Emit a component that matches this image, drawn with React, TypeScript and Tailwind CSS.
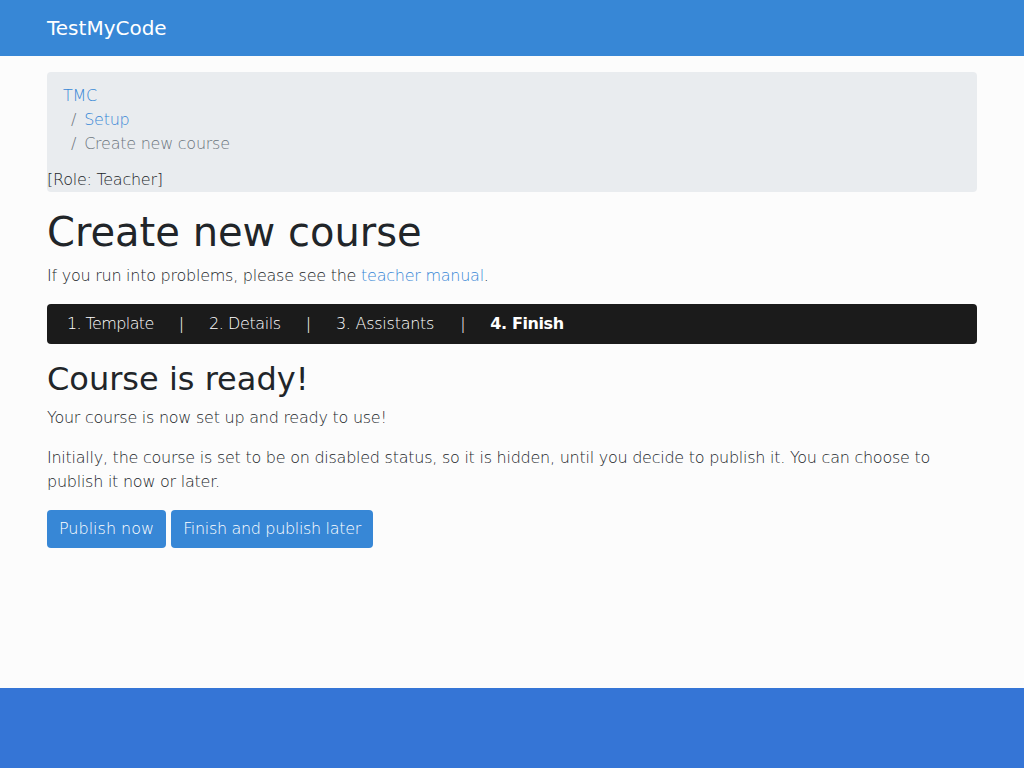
import React from "react";

const light = "font-extralight tracking-[-0.25px]";

export default function App() {
  const font = { fontFamily: '"DejaVu Sans", sans-serif' };
  return (
    <div className="min-h-screen flex flex-col bg-[#fcfcfc] text-[#212529]" style={font}>
      <header className="h-[56px] bg-[#3787d6] flex items-center">
        <div className="w-[930px] mx-auto">
          <span className="text-white text-[20px] leading-[30px]">TestMyCode</span>
        </div>
      </header>
      <main className="flex-1">
        <div className="w-[930px] mx-auto">
          <div className="mt-4 bg-[#e9ecef] rounded">
            <ol className={`px-4 pt-3 pb-3 text-[16px] leading-[24px] ${light}`}>
              <li><a className="text-[#3787d6]">TMC</a></li>
              <li className="pl-2"><span className="text-[#6c757d] pr-2">/</span><a className="text-[#3787d6]">Setup</a></li>
              <li className="pl-2"><span className="text-[#6c757d] pr-2">/</span><span className="text-[#6c757d]">Create new course</span></li>
            </ol>
            <div className={`text-[16px] leading-[24px] ${light}`}>[Role: Teacher]</div>
          </div>
          <h1 className="mt-4 mb-2 text-[40px] leading-[48px]">Create new course</h1>
          <p className={`mb-4 text-[16px] leading-[24px] ${light}`}>
            If you run into problems, please see the <a className="text-[#3787d6]">teacher manual</a>.
          </p>
          <div className={`h-[40px] bg-[#1b1b1b] rounded flex items-center text-white text-[16px] leading-[24px] px-5 ${light}`}>
            <span className="tracking-[-0.6px]">1. Template</span>
            <span className="px-[25px]">|</span>
            <span className="tracking-[-0.4px]">2. Details</span>
            <span className="px-[25px]">|</span>
            <span>3. Assistants</span>
            <span className="pl-[26px] pr-[25px]">|</span>
            <span className="font-bold tracking-[-0.4px]">4. Finish</span>
          </div>
          <h2 className="mt-4 mb-2 text-[32px] leading-[38px]">Course is ready!</h2>
          <p className={`mb-4 text-[16px] leading-[24px] ${light}`}>Your course is now set up and ready to use!</p>
          <p className={`mb-4 text-[16px] leading-[24px] ${light}`}>
            Initially, the course is set to be on disabled status, so it is hidden, until you decide to publish it. You can choose to publish it now or later.
          </p>
          <div className="flex gap-[5px]">
            <button className="bg-[#3787d6] text-white text-[16px] leading-[24px] px-3 py-[7px] rounded font-extralight tracking-normal">Publish now</button>
            <button className="bg-[#3787d6] text-white text-[16px] leading-[24px] px-3 py-[7px] rounded font-extralight tracking-[-0.33px]">Finish and publish later</button>
          </div>
        </div>
      </main>
      <footer className="h-[80px] bg-[#3575d6]"></footer>
    </div>
  );
}
